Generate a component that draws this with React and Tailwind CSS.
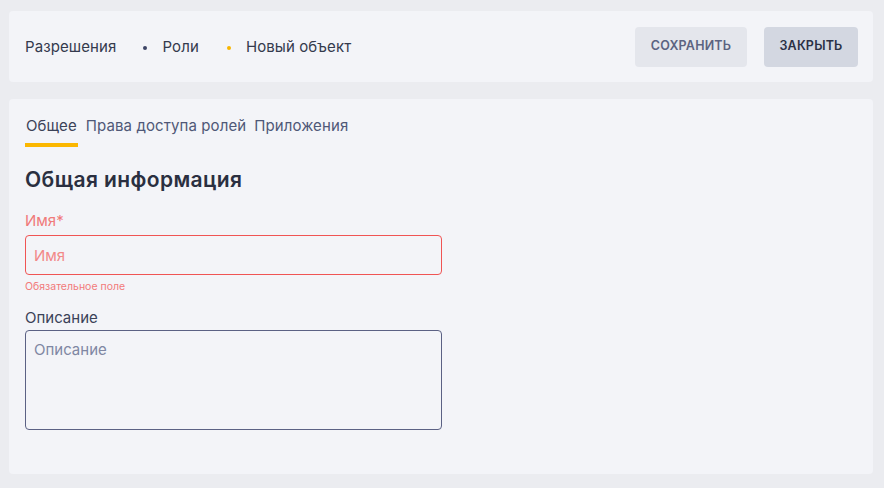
export default function App() {
  return (
    <div className="h-[488px] w-[884px] bg-[#ebecf0] pt-[11px] pl-[9px] pr-[11px] pb-[14px] flex flex-col gap-[17px]" style={{ fontFamily: 'Inter, "Noto Sans", sans-serif' }}>
      <div className="h-[71px] shrink-0 rounded-[4px] bg-[#f3f4f8] flex items-center justify-between pl-[16px] pr-[15px]">
        <div className="flex items-center text-[15px] text-[#343a4d] tracking-[0.1px] pt-[2px]">
          <span>Разрешения</span>
          <span className="w-[4px] h-[4px] rounded-full bg-[#3d4466] ml-[27px] mr-[15px]"></span>
          <span>Роли</span>
          <span className="w-[4px] h-[4px] rounded-full bg-[#f8b500] ml-[28px] mr-[15px]"></span>
          <span>Новый объект</span>
        </div>
        <div className="flex items-center gap-[17px]">
          <button className="h-[40px] w-[112px] rounded-[4px] bg-[#e4e6ec] text-[12.5px] font-semibold text-[#5b6381] tracking-[0.2px]">СОХРАНИТЬ</button>
          <button className="h-[40px] w-[94px] rounded-[4px] bg-[#d3d7e1] text-[12.5px] font-semibold text-[#2b3045] tracking-[0.2px]">ЗАКРЫТЬ</button>
        </div>
      </div>
      <div className="flex-1 rounded-[4px] bg-[#f3f4f8] pl-[16px] pt-[17px]">
        <div className="flex items-start gap-[8px] text-[15px] tracking-[0.1px]">
          <div className="flex flex-col">
            <span className="text-[#3b4258] leading-[20px] px-[1px]">Общее</span>
            <span className="mt-[7px] h-[4px] bg-[#fbb700]"></span>
          </div>
          <span className="text-[#4f5877] leading-[20px]">Права доступа ролей</span>
          <span className="text-[#4f5877] leading-[20px]">Приложения</span>
        </div>
        <h2 className="mt-[19px] text-[21px] font-semibold text-[#2a2f40] leading-[28px] tracking-[0.4px]">Общая информация</h2>
        <div className="w-[417px] mt-[17px]">
          <label className="block text-[15px] text-[#f07a7a] leading-[20px]">Имя*</label>
          <input className="mt-[4px] w-full h-[40px] rounded-[4px] border border-[#f05454] bg-[#f3f4f8] px-[8px] text-[15px] outline-none placeholder:text-[#f28888]" placeholder="Имя" style={{ fontFamily: 'inherit' }} />
          <div className="mt-[5px] text-[10.5px] text-[#f27a7a] leading-[14px]">Обязательное поле</div>
          <label className="block mt-[14px] text-[15px] text-[#3b4258] leading-[20px]">Описание</label>
          <textarea className="block mt-[2px] w-full h-[100px] rounded-[4px] border border-[#5b6184] bg-[#f3f4f8] px-[8px] py-[8px] text-[15px] outline-none resize-none placeholder:text-[#7f87a3]" placeholder="Описание" style={{ fontFamily: 'inherit' }}></textarea>
        </div>
      </div>
    </div>
  );
}
